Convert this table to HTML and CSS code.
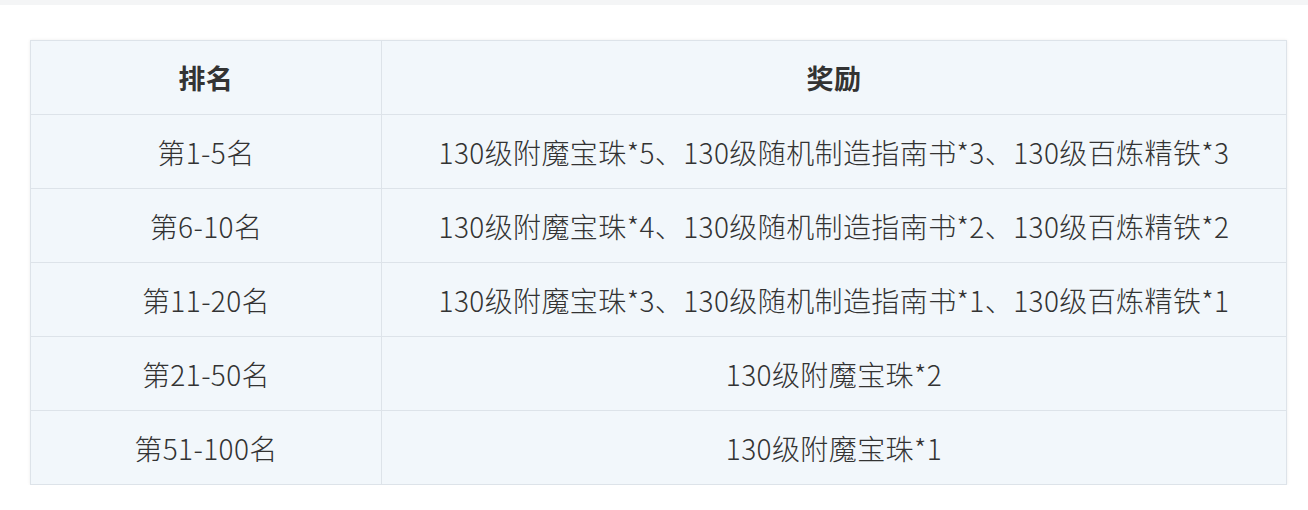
FILE: index.html
```html
<!DOCTYPE html>
<html lang="zh-CN">
<head>
<meta charset="utf-8">
<title>排名奖励</title>
<link rel="stylesheet" href="styles.css">
</head>
<body>
<div class="topbar"></div>
<div class="page">
  <table class="rewards">
    <thead>
      <tr><th class="rank">排名</th><th>奖励</th></tr>
    </thead>
    <tbody>
      <tr><td>第1-5名</td><td>130级附魔宝珠*5、130级随机制造指南书*3、130级百炼精铁*3</td></tr>
      <tr><td>第6-10名</td><td>130级附魔宝珠*4、130级随机制造指南书*2、130级百炼精铁*2</td></tr>
      <tr><td>第11-20名</td><td>130级附魔宝珠*3、130级随机制造指南书*1、130级百炼精铁*1</td></tr>
      <tr><td>第21-50名</td><td>130级附魔宝珠*2</td></tr>
      <tr><td>第51-100名</td><td>130级附魔宝珠*1</td></tr>
    </tbody>
  </table>
</div>
</body>
</html>
```
FILE: styles.css
```css
html, body {
  margin: 0;
  padding: 0;
  background: #ffffff;
}
body {
  font-family: "Noto Sans CJK SC", "Noto Sans", sans-serif;
  color: #333333;
}
.topbar {
  height: 5px;
  background: #f4f5f6;
}
.page {
  padding: 35px 22px 0 30px;
}
.rewards {
  width: 1257px;
  border-collapse: collapse;
  background: #f2f7fb;
  box-shadow: 0 0 3px rgba(0, 0, 0, 0.08);
}
.rewards th,
.rewards td {
  height: 73px;
  border: 1px solid #dde3e9;
  text-align: center;
  vertical-align: middle;
  font-size: 28px;
  line-height: 1;
  letter-spacing: 0.4px;
  padding: 0;
}
.rewards th {
  font-weight: 700;
  font-size: 27px;
  color: #333333;
}
.rewards td {
  font-weight: 300;
  color: #333333;
}
.rewards .rank {
  width: 350px;
}
```
